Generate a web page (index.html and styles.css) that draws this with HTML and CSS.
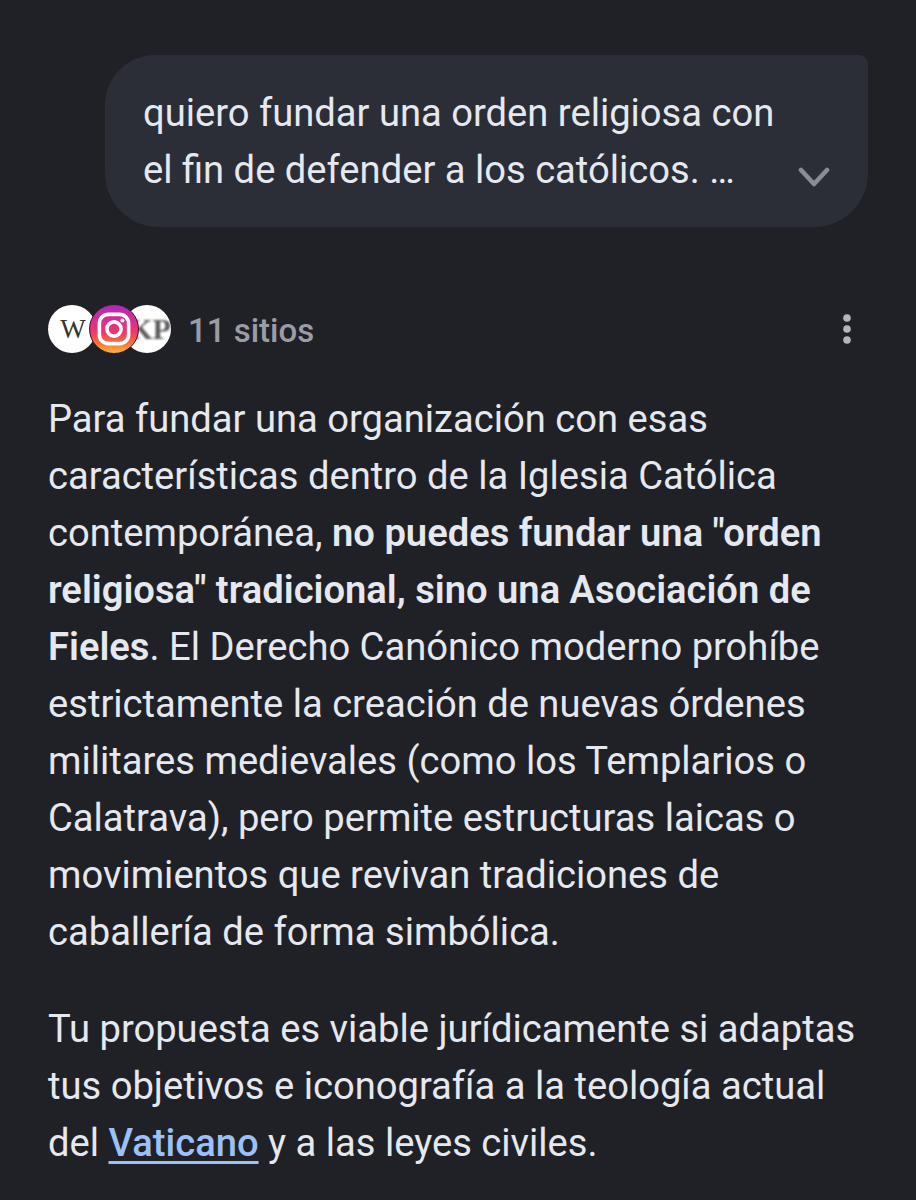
FILE: index.html
```html
<!DOCTYPE html>
<html lang="es">
<head>
    <meta charset="UTF-8">
    <title>Chat</title>
    <link rel="stylesheet" href="styles.css">
</head>
<body>
    <main class="chat">
        <div class="consulta">
            <p>quiero fundar una orden religiosa con<br>el fin de defender a los católicos. …</p>
            <svg class="flecha" width="32" height="20" viewBox="0 0 32 20"><path d="M3 3 L16 17 L29 3" fill="none" stroke="#8a8c92" stroke-width="4.6" stroke-linecap="round" stroke-linejoin="round"/></svg>
        </div>
        <div class="fuentes">
            <div class="logos">
                <span class="logo logo-w">W</span>
                <span class="logo logo-kp"><span>KP</span></span>
                <span class="logo logo-ig">
                    <svg width="36" height="36" viewBox="0 0 32 32"><rect x="3" y="3" width="26" height="26" rx="8" fill="none" stroke="#fff" stroke-width="3.2"/><circle cx="16" cy="16" r="6.3" fill="none" stroke="#fff" stroke-width="3.2"/><circle cx="23.5" cy="8.5" r="1.8" fill="#fff"/></svg>
                </span>
            </div>
            <span class="sitios">11 sitios</span>
            <svg class="menu" width="10" height="32" viewBox="0 0 10 32"><circle cx="5" cy="5" r="3.8" fill="#b4b5bc"/><circle cx="5" cy="16" r="3.8" fill="#b4b5bc"/><circle cx="5" cy="27" r="3.8" fill="#b4b5bc"/></svg>
        </div>
        <p class="parrafo">Para fundar una organización con esas<br>características dentro de la Iglesia Católica<br>contemporánea, <strong>no puedes fundar una "orden<br>religiosa" tradicional, sino una Asociación de<br>Fieles</strong>. El Derecho Canónico moderno prohíbe<br>estrictamente la creación de nuevas órdenes<br>militares medievales (como los Templarios o<br>Calatrava), pero permite estructuras laicas o<br>movimientos que revivan tradiciones de<br>caballería de forma simbólica.</p>
        <p class="parrafo">Tu propuesta es viable jurídicamente si adaptas<br>tus objetivos e iconografía a la teología actual<br>del <a href="#">Vaticano</a> y a las leyes civiles.</p>
    </main>
</body>
</html>
```
FILE: styles.css
```css
html, body {
    height: 100%;
}

body {
    margin: 0;
    background-color: #202126;
    color: #e6e8ef;
    font-family: "Roboto", "Noto Sans", sans-serif;
    overflow: hidden;
}

.chat {
    display: flex;
    flex-direction: column;
    padding: 55px 48px 0 48px;
}

/* Burbuja de la consulta */
.consulta {
    position: relative;
    margin-left: 57px;
    width: 763px;
    height: 172px;
    box-sizing: border-box;
    padding: 30px 38px;
    background-color: #2b2e36;
    border-radius: 50px 9px 54px 54px;
}

.consulta p {
    margin: 0;
    font-size: 38.15px;
    line-height: 57px;
}

.flecha {
    position: absolute;
    right: 38px;
    top: 112px;
}

/* Fila de fuentes */
.fuentes {
    display: flex;
    align-items: center;
    margin-top: 75px;
    height: 54px;
}

.logos {
    position: relative;
    display: flex;
    width: 123px;
    height: 48px;
}

.logo {
    position: absolute;
    top: 0;
    display: flex;
    align-items: center;
    justify-content: center;
    width: 48px;
    height: 48px;
    border-radius: 50%;
    box-sizing: border-box;
    overflow: hidden;
}

.logo-w {
    left: 0;
    padding-left: 2px;
    background-color: #fff;
    color: #333;
    font-family: "Liberation Serif", serif;
    font-size: 27px;
}

.logo-ig {
    left: 41px;
    top: -1px;
    width: 50px;
    height: 50px;
    background: linear-gradient(to bottom, #a92bb8 0%, #d92c94 30%, #f0386a 58%, #f9743a 80%, #fdb53c 100%);
    border: 1px solid #2a1c2e;
}

.logo-kp {
    left: 75px;
    padding-left: 6px;
    background-color: #fff;
    color: #5c5c5c;
    font-family: "Liberation Serif", serif;
    font-size: 30px;
    font-weight: bold;
}

.logo-kp span {
    filter: blur(1.2px);
}

.sitios {
    margin-left: 17px;
    padding-top: 2px;
    font-size: 33px;
    font-weight: 500;
    color: #9a9ca6;
}

.menu {
    margin-left: auto;
    margin-right: 16px;
}

/* Texto de la respuesta */
.parrafo {
    margin: 0;
    font-size: 38.15px;
    line-height: 57px;
}

.parrafo strong {
    font-weight: 600;
}

.fuentes + .parrafo {
    margin-top: 35px;
}

.parrafo + .parrafo {
    margin-top: 40px;
}

.parrafo a {
    color: #9cc0fa;
    font-weight: 500;
    text-decoration-thickness: 3px;
    text-underline-offset: 5px;
}
```
